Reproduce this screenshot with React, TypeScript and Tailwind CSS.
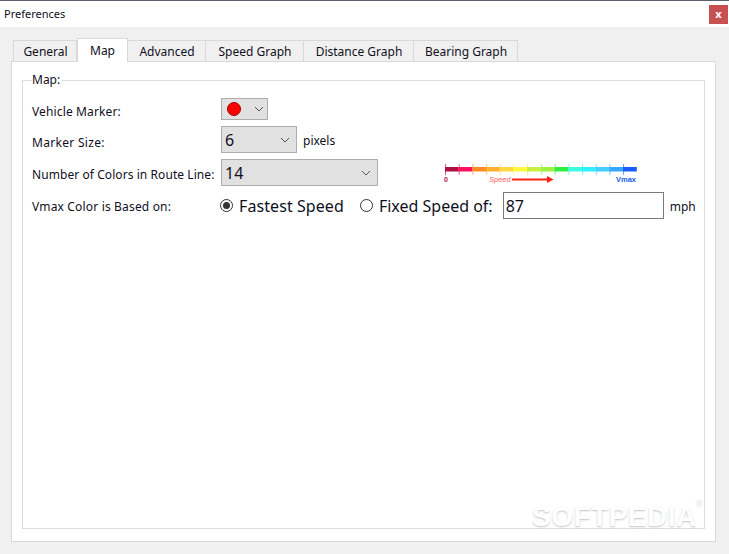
const tabs = [
  { name: "General", w: "w-[64px]" },
  { name: "Map", w: "w-[51px]", active: true },
  { name: "Advanced", w: "w-[78px]" },
  { name: "Speed Graph", w: "w-[98px]" },
  { name: "Distance Graph", w: "w-[110px]" },
  { name: "Bearing Graph", w: "w-[104px]" },
];

const colors = [
  "#b0103f", "#ff1060", "#ff8a20", "#ffb030", "#ffd840", "#fffa40", "#c8f040",
  "#a0f040", "#30ee40", "#40fae0", "#30f0ff", "#40d0ff", "#38a8ff", "#1c5cff",
];

const Chevron = () => (
  <svg width="10" height="6" viewBox="0 0 10 6" fill="none" stroke="#555" strokeWidth="1">
    <path d="M1 1l4 4 4-4" />
  </svg>
);

// Colour scale next to the route line select
const SpeedScale = () => (
  <svg width="194" height="26" viewBox="0 0 194 26" className="block">
    {colors.map((c, i) => (
      <rect key={c} x={1 + i * 13.7} y="6" width="13.7" height="4.5" fill={c} />
    ))}
    {colors.map((c, i) => (
      <rect key={c} x={1 + i * 13.7} y="3" width="1" height="11" fill={c} opacity="0.65" />
    ))}
    <text x="0" y="21" fontSize="7" fontWeight="700" fill="#b0103f" fontFamily="Liberation Sans">0</text>
    <text x="45" y="21" fontSize="7.5" fontStyle="italic" fill="#ff6060" fontFamily="Liberation Sans">Speed</text>
    <path d="M68 18.5h36" stroke="#ff2010" strokeWidth="2" />
    <path d="M103 15l6.5 3.5-6.5 3.5z" fill="#ff2010" />
    <text x="172" y="21" fontSize="7.5" fontWeight="700" fill="#2060e0" fontFamily="Liberation Sans">Vmax</text>
  </svg>
);

const Radio = ({ checked }: { checked?: boolean }) => (
  <span className="w-[13px] h-[13px] rounded-full border border-[#333] bg-white flex items-center justify-center shrink-0">
    {checked && <span className="w-[7px] h-[7px] rounded-full bg-[#333]" />}
  </span>
);

export default function App() {
  return (
    <div className="w-[729px] h-[554px] bg-[#f0f0f0] flex flex-col text-[12px] text-[#10101c] overflow-hidden relative whitespace-nowrap font-['Noto_Sans',sans-serif]">
      {/* Title bar */}
      <div className="h-[27px] bg-white border-t border-[#5a5f70] flex items-center justify-between pl-[4px] pr-[1px] shrink-0">
        <span className="text-[11px]">Preferences</span>
        <div className="w-[19px] h-[19px] bg-[#c75050] text-white text-[11px] font-bold flex items-center justify-center">
          x
        </div>
      </div>

      {/* Tabs */}
      <div className="flex items-end h-[34px] pl-[13px] shrink-0">
        {tabs.map((t) =>
          t.active ? (
            <div
              key={t.name}
              className={`${t.w} h-[24px] -mb-[1px] z-10 bg-white border border-b-0 border-[#d9d9d9] flex items-center justify-center pt-[1px]`}
            >
              {t.name}
            </div>
          ) : (
            <div
              key={t.name}
              className={`${t.w} h-[21px] bg-[#f0f0f0] border border-l-0 first:border-l border-b-0 border-[#d9d9d9] flex items-center justify-center pt-[2px] pl-[1px]`}
            >
              {t.name}
            </div>
          )
        )}
      </div>

      {/* Panel */}
      <div className="ml-[11px] w-[705px] h-[481px] bg-white border border-[#d9d9d9] px-[10px] pt-[10px]">
        <fieldset className="w-[683px] h-[457px] border border-[#dcdcdc] pl-[9px]">
          <legend className="pl-[0px] pr-[2px] leading-[16px] h-[16px]">Map:</legend>

          <div className="flex items-center h-[22px] mt-[10px]">
            <span className="w-[189px] mt-[6px] tracking-[0.13px]">Vehicle Marker:</span>
            <div className="w-[47px] h-[22px] bg-[#e1e1e1] border border-[#adadad] flex items-center pl-[5px] gap-[13px]">
              <span className="w-[14px] h-[14px] rounded-full bg-[#ff0000] border border-[#a00000]" />
              <Chevron />
            </div>
          </div>

          <div className="flex items-center h-[27px] mt-[6px]">
            <span className="w-[189px] mt-[7px] tracking-[0.3px]">Marker Size:</span>
            <div className="w-[76px] h-[27px] bg-[#e1e1e1] border border-[#adadad] flex items-center justify-between pl-[3px] pr-[6px] text-[16px]">
              6
              <Chevron />
            </div>
            <span className="ml-[6px] mt-[3px]">pixels</span>
          </div>

          <div className="flex items-center h-[27px] mt-[6px]">
            <span className="w-[189px] mt-[4px] tracking-[0.07px]">Number of Colors in Route Line:</span>
            <div className="w-[157px] h-[27px] bg-[#e1e1e1] border border-[#adadad] flex items-center justify-between pl-[3px] pr-[6px] text-[16px]">
              14
              <Chevron />
            </div>
            <div className="ml-[66px] mt-[3px]">
              <SpeedScale />
            </div>
          </div>

          <div className="flex items-center h-[27px] mt-[6px]">
            <span className="w-[188px] mt-[2px] tracking-[0.17px]">Vmax Color is Based on:</span>
            <Radio checked />
            <span className="ml-[6px] text-[16px] tracking-[0.08px]">Fastest Speed</span>
            <span className="ml-[16px]">
              <Radio />
            </span>
            <span className="ml-[6px] text-[16px]">Fixed Speed of:</span>
            <div className="ml-[10px] w-[161px] h-[27px] border border-[#7a7a7a] bg-white flex items-center pl-[2px] text-[16px]">
              87
            </div>
            <span className="ml-[6px] mt-[2px]">mph</span>
          </div>
        </fieldset>
      </div>

      {/* Watermark */}
      <span className="absolute left-[532px] top-[500px] text-[28px] leading-[34px] font-bold tracking-[0.5px] text-white [text-shadow:0_1px_2px_#c4c4c4] font-['Liberation_Sans',sans-serif]">
        SOFTPEDIA
      </span>
      <span className="absolute left-[696px] top-[498px] text-[9px] leading-[12px] text-white [text-shadow:0_0_2px_#bbbbbb] font-['Liberation_Sans',sans-serif]">
        ®
      </span>
    </div>
  );
}
